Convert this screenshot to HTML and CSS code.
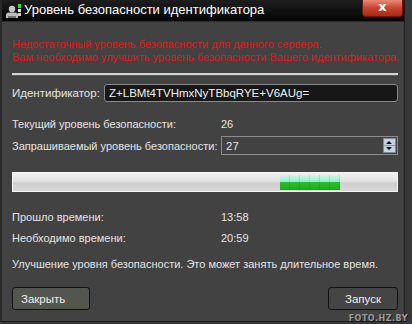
FILE: index.html
```html
<!DOCTYPE html>
<html>
<head>
	<meta charset="utf-8">
	<title>Уровень безопасности идентификатора</title>
	<link rel="stylesheet" href="styles.css">
</head>
<body>
	<div class="window">
		<div class="titlebar">
			<svg class="title_icon" width="18" height="16" viewBox="0 0 18 16">
				<circle cx="8" cy="6" r="3.2" fill="#c8c8c8"/>
				<path d="M2 15 L2 12 Q2 9.5 5 9.5 L11 9.5 Q14 9.5 14 12 L14 15 Z" fill="#bdbdbd"/>
				<rect x="4" y="13" width="8" height="2" fill="#707070"/>
				<rect x="14" y="1" width="3" height="4" fill="#2ee02e"/>
				<rect x="14" y="6" width="3" height="3" fill="#e8e8e8"/>
				<rect x="14" y="10" width="3" height="3" fill="#d0d0d0"/>
			</svg>
			<span class="title">Уровень безопасности идентификатора</span>
			<div class="close_btn">x</div>
		</div>

		<div class="content">
			<div class="warning">
				<div>Недостаточный уровень безопасности для данного сервера.</div>
				<div>Вам необходимо улучшить уровень безопасности Вашего идентификатора.</div>
			</div>
			<div class="separator"></div>

			<div class="id_row">
				<label>Идентификатор:</label>
				<div class="id_box">Z+LBMt4TVHmxNyTBbqRYE+V6AUg=</div>
			</div>

			<div class="row current">
				<span class="label">Текущий уровень безопасности:</span>
				<span class="value">26</span>
			</div>
			<div class="row requested">
				<span class="label">Запрашиваемый уровень безопасности:</span>
				<div class="spinbox">
					<span class="spin_value">27</span>
					<div class="spin_btns">
						<div class="spin_up"></div>
						<div class="spin_down"></div>
					</div>
				</div>
			</div>

			<div class="progress">
				<div class="chunk"></div>
			</div>

			<div class="row elapsed">
				<span class="label">Прошло времени:</span>
				<span class="value">13:58</span>
			</div>
			<div class="row needed">
				<span class="label">Необходимо времени:</span>
				<span class="value">20:59</span>
			</div>

			<div class="info">Улучшение уровня безопасности. Это может занять длительное время.</div>

			<div class="buttons">
				<button type="button" class="btn btn_close">Закрыть</button>
				<button type="button" class="btn btn_start">Запуск</button>
			</div>
		</div>
	</div>
	<div class="watermark">FOTO.HZ.BY</div>
</body>
</html>
```

FILE: styles.css
```css
body
{
	margin: 0;
	background: #383838;
	font-family: "Liberation Sans", Arial, sans-serif;
	font-size: 11px;
	color: #e4e4e4;
	width: 412px;
	height: 324px;
	overflow: hidden;
	position: relative;
}
.window
{
	width: 402px;
	height: 321px;
	background: #424242;
	border-left: 2px solid #2a2a2a;
	border-right: 1px solid #1c1c1c;
	border-bottom: 1px solid #1c1c1c;
	box-sizing: content-box;
}
.titlebar
{
	height: 22px;
	background: linear-gradient(#1e1e1e, #050505);
	display: flex;
	align-items: center;
	border-bottom: 1px solid #2c2c2c;
	box-sizing: border-box;
}
.title_icon
{
	margin-left: 2px;
	margin-right: 2px;
}
.title
{
	color: #ffffff;
	font-size: 13px;
	margin-top: -2px;
}
.close_btn
{
	margin-left: auto;
	margin-right: 1px;
	align-self: flex-start;
	width: 41px;
	height: 17px;
	box-sizing: border-box;
	background: linear-gradient(#e88a78, #c8442e 50%, #a82a18);
	border: 1px solid #6a1a10;
	border-top: none;
	border-radius: 0 0 4px 4px;
	color: #ffffff;
	font-family: "DejaVu Sans", sans-serif;
	font-weight: bold;
	font-size: 13px;
	line-height: 14px;
	text-align: center;
}
.content
{
	padding: 16px 6px 0 10px;
}
.warning
{
	color: #dc1c1c;
	line-height: 13px;
	white-space: nowrap;
}
.separator
{
	height: 2px;
	background: #d4d4d4;
	margin-top: 9px;
	border-bottom: 1px solid #5a5a5a;
}
.id_row
{
	display: flex;
	align-items: center;
	margin-top: 8px;
	height: 18px;
}
.id_row label
{
	width: 92px;
	font-size: 11.5px;
}
.id_box
{
	flex: 1;
	height: 18px;
	box-sizing: border-box;
	background: #171717;
	border: 1px solid #8a8a8a;
	border-radius: 3px;
	padding-left: 4px;
	line-height: 16px;
	color: #f2f2f2;
	font-size: 11.5px;
}
.row
{
	display: flex;
	align-items: center;
}
.row .label
{
	width: 209px;
}
.current
{
	margin-top: 15px;
	height: 14px;
}
.requested
{
	margin-top: 5px;
	height: 19px;
}
.spinbox
{
	flex: 1;
	height: 19px;
	box-sizing: border-box;
	border: 1px solid #8c8c8c;
	display: flex;
	align-items: center;
	padding: 1px;
}
.spin_value
{
	flex: 1;
	padding-left: 3px;
	font-size: 11.5px;
}
.spin_btns
{
	width: 13px;
	height: 15px;
	display: flex;
	flex-direction: column;
	background: #c6d2dc;
	border: 1px solid #7a8a98;
	box-sizing: border-box;
}
.spin_up, .spin_down
{
	flex: 1;
	position: relative;
}
.spin_up
{
	border-bottom: 1px solid #8898a6;
}
.spin_up::after, .spin_down::after
{
	content: "";
	position: absolute;
	left: 2px;
	top: 2px;
	border-left: 3px solid transparent;
	border-right: 3px solid transparent;
}
.spin_up::after
{
	border-bottom: 3px solid #000;
}
.spin_down::after
{
	top: 1px;
	border-top: 3px solid #000;
}
.progress
{
	margin-top: 17px;
	height: 20px;
	box-sizing: border-box;
	border: 1px solid #f4f4f4;
	background: linear-gradient(#f0f0f0, #e2e2e2 45%, #cfcfcf 55%, #d8d8d8);
	position: relative;
}
.chunk
{
	position: absolute;
	left: 267px;
	top: 2px;
	width: 60px;
	height: 15px;
	background:
		repeating-linear-gradient(90deg, transparent 0 9px, rgba(0, 80, 0, 0.12) 9px 10px),
		linear-gradient(#c8fbe8, #8ff0c8 45%, #2cbf2c 50%, #1ea61e);
}
.elapsed
{
	margin-top: 18px;
	height: 14px;
}
.needed
{
	margin-top: 7px;
	height: 14px;
}
.info
{
	margin-top: 12px;
	height: 14px;
	line-height: 14px;
}
.buttons
{
	display: flex;
	justify-content: space-between;
	margin-top: 16px;
}
.btn
{
	height: 23px;
	border: 1px solid #121212;
	border-radius: 3px;
	color: #f0f0f0;
	font-family: "Liberation Sans", Arial, sans-serif;
	font-size: 11.5px;
	padding: 0;
}
.btn_close
{
	width: 78px;
	background: #53554f;
	text-align: left;
	padding-left: 8px;
}
.btn_start
{
	width: 70px;
	background: #454545;
}
.watermark
{
	position: absolute;
	right: 4px;
	bottom: 1px;
	font-family: "DejaVu Sans", sans-serif;
	font-size: 8px;
	font-weight: bold;
	letter-spacing: 0.5px;
	color: #9a9a9a;
	text-shadow: 1px 1px 0 #1a1a1a;
}
```
